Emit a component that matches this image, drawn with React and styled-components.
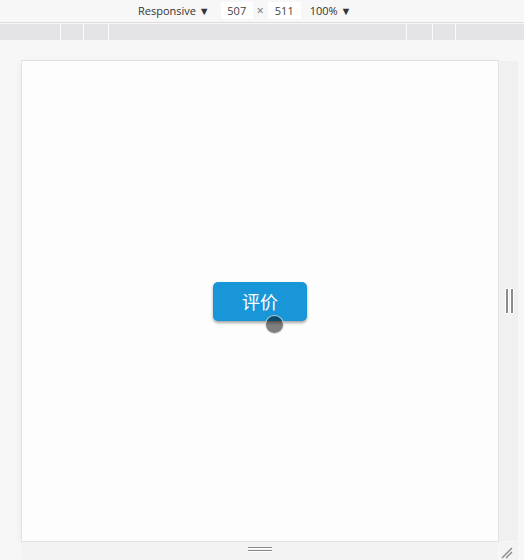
import styled, { createGlobalStyle } from "styled-components";

const GlobalStyle = createGlobalStyle`
  html, body {
    margin: 0;
    padding: 0;
    background: #f7f7f7;
  }
  body {
    width: 524px;
    height: 560px;
    overflow: hidden;
    font-family: "Open Sans", "Noto Sans", sans-serif;
  }
`;

const Page = styled.div`
  display: flex;
  flex-direction: column;
  width: 524px;
  height: 560px;
`;

const Toolbar = styled.div`
  display: flex;
  align-items: center;
  height: 24px;
  padding: 0 0 1px 138px;
  background: #f7f7f7;
  border-bottom: 1px solid #dcdcdc;
  font-size: 11px;
  color: #333;
  box-sizing: border-box;
`;

const Label = styled.span`
  margin-right: ${(p) => p.$gap || 0}px;
  margin-left: ${(p) => p.$lead || 0}px;
  white-space: nowrap;
`;

const SizeBox = styled.span`
  display: inline-flex;
  align-items: center;
  justify-content: center;
  width: ${(p) => p.$w}px;
  height: 17px;
  background: #fff;
  color: #444;
`;

const Times = styled.span`
  width: 15px;
  text-align: center;
  color: #666;
  font-size: 12px;
`;

const Ruler = styled.div`
  display: grid;
  grid-template-columns: 61px 23px 25px 298px 26px 23px 1fr;
  height: 16px;
  margin-top: 1px;
  background: #e4e4e6;
`;

const RulerCell = styled.div`
  border-right: ${(p) => (p.$last ? "none" : "1px solid #fafafa")};
`;

const Canvas = styled.div`
  flex: 1;
  display: grid;
  grid-template-columns: 476px 18px;
  grid-template-rows: 480px 18px;
  column-gap: 2px;
  row-gap: 1px;
  padding: 21px 0 0 22px;
`;

const Viewport = styled.div`
  display: flex;
  align-items: center;
  justify-content: center;
  background: #fdfdfe;
  box-shadow: 0 0 0 1px #e2e2e4, 0 2px 8px rgba(0, 0, 0, 0.08);
`;

const SideHandle = styled.div`
  display: flex;
  align-items: center;
  justify-content: center;
  gap: 1px;
  background: #f0f0f0;
`;

const BottomHandle = styled.div`
  display: flex;
  flex-direction: column;
  align-items: center;
  padding-top: 5px;
  gap: 1px;
  background: #f3f3f3;
`;

const GripV = styled.span`
  width: 2px;
  height: 24px;
  background: #8a8a8a;
  border: 1px solid #fff;
`;

const GripH = styled.span`
  width: 24px;
  height: 1px;
  background: #8a8a8a;
  border-bottom: 1px solid #fff;
`;

const Corner = styled.div`
  display: flex;
  align-items: flex-end;
  justify-content: flex-start;
  background: #f3f3f3;
`;

const Stage = styled.div`
  position: relative;
`;

const RateButton = styled.button`
  width: 94px;
  height: 39px;
  border: none;
  border-radius: 5px;
  background: #1996d8;
  color: #fff;
  font-family: "Noto Sans CJK SC", "Noto Sans", sans-serif;
  font-size: 18px;
  box-shadow: 0 2px 3px rgba(0, 0, 0, 0.35);
  cursor: pointer;
  padding: 0;
  line-height: 39px;
`;

const Touch = styled.span`
  position: absolute;
  left: 52px;
  top: 33px;
  width: 17px;
  height: 17px;
  border-radius: 50%;
  background: rgba(0, 0, 0, 0.5);
  border: 1px solid rgba(255, 255, 255, 0.7);
  pointer-events: none;
`;

export default function App() {
  return (
    <>
      <GlobalStyle />
      <Page>
        <Toolbar>
          <Label $gap={11}>Responsive ▼</Label>
          <SizeBox $w={32}>507</SizeBox>
          <Times>×</Times>
          <SizeBox $w={33}>511</SizeBox>
          <Label $lead={9}>100% ▼</Label>
        </Toolbar>
        <Ruler>
          <RulerCell />
          <RulerCell />
          <RulerCell />
          <RulerCell />
          <RulerCell />
          <RulerCell />
          <RulerCell $last />
        </Ruler>
        <Canvas>
          <Viewport>
            <Stage>
              <RateButton>评价</RateButton>
              <Touch />
            </Stage>
          </Viewport>
          <SideHandle>
            <GripV />
            <GripV />
          </SideHandle>
          <BottomHandle>
            <GripH />
            <GripH />
          </BottomHandle>
          <Corner>
            <svg width="14" height="14" viewBox="0 0 14 14">
              <path d="M2 12 L12 2 M6 12 L12 6" stroke="#888" strokeWidth="1.3" />
            </svg>
          </Corner>
        </Canvas>
      </Page>
    </>
  );
}
